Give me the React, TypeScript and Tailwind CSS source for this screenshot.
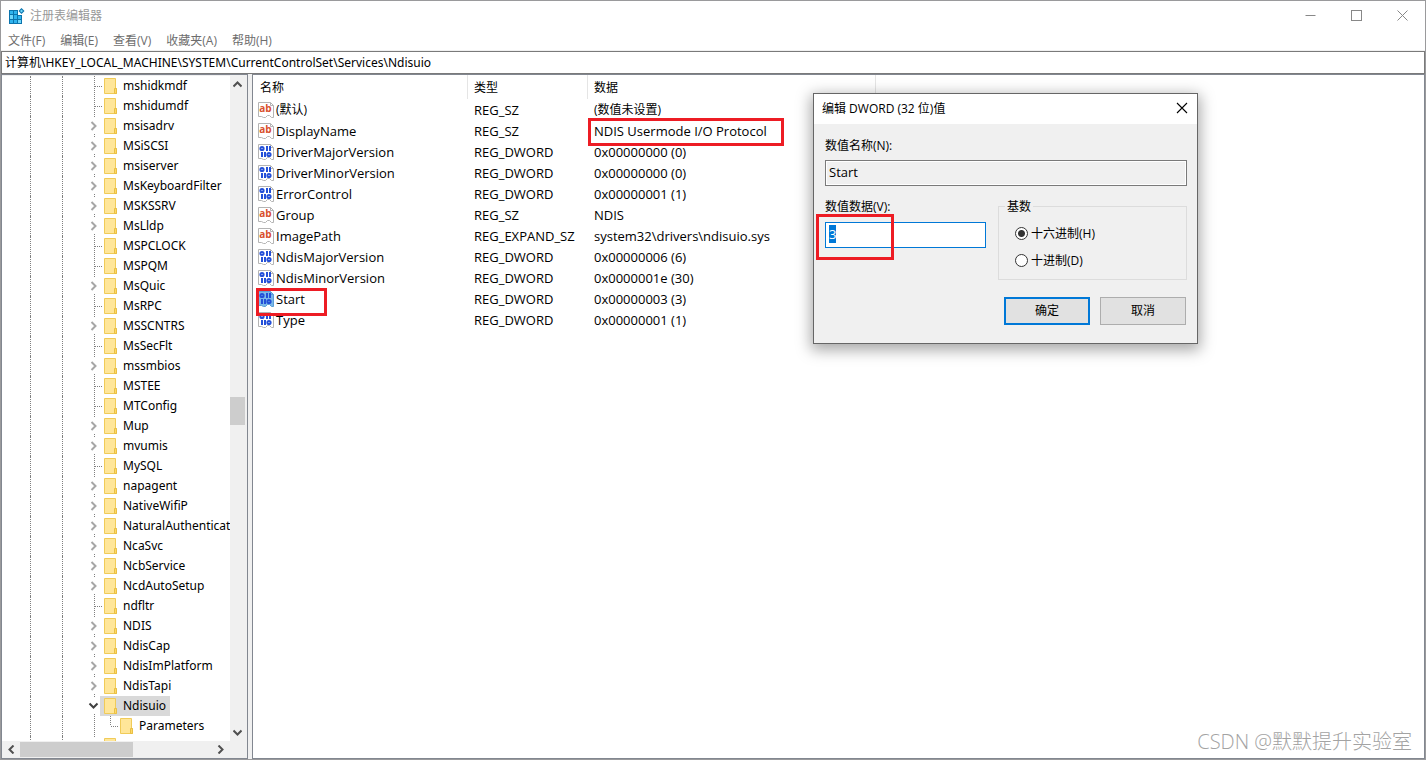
import { FC, ReactNode, useEffect, useRef, useState } from 'react';

type TreeNode = {
  name: string;
  state: 'leaf' | 'collapsed' | 'expanded';
};

type ValueKind = 'string' | 'binary';

type RegistryValue = {
  name: string;
  kind: ValueKind;
  type: string;
  data: string;
};

const leaf = (name: string): TreeNode => ({ name, state: 'leaf' });
const branch = (name: string): TreeNode => ({ name, state: 'collapsed' });

const nodes: TreeNode[] = [
  leaf('mshidkmdf'),
  leaf('mshidumdf'),
  branch('msisadrv'),
  branch('MSiSCSI'),
  branch('msiserver'),
  branch('MsKeyboardFilter'),
  branch('MSKSSRV'),
  branch('MsLldp'),
  leaf('MSPCLOCK'),
  leaf('MSPQM'),
  branch('MsQuic'),
  leaf('MsRPC'),
  branch('MSSCNTRS'),
  leaf('MsSecFlt'),
  branch('mssmbios'),
  leaf('MSTEE'),
  leaf('MTConfig'),
  branch('Mup'),
  branch('mvumis'),
  leaf('MySQL'),
  branch('napagent'),
  branch('NativeWifiP'),
  branch('NaturalAuthenticat'),
  branch('NcaSvc'),
  branch('NcbService'),
  branch('NcdAutoSetup'),
  leaf('ndfltr'),
  branch('NDIS'),
  branch('NdisCap'),
  branch('NdisImPlatform'),
  branch('NdisTapi'),
  { name: 'Ndisuio', state: 'expanded' }
];

const values: RegistryValue[] = [
  { name: '(默认)', kind: 'string', type: 'REG_SZ', data: '(数值未设置)' },
  { name: 'DisplayName', kind: 'string', type: 'REG_SZ', data: 'NDIS Usermode I/O Protocol' },
  { name: 'DriverMajorVersion', kind: 'binary', type: 'REG_DWORD', data: '0x00000000 (0)' },
  { name: 'DriverMinorVersion', kind: 'binary', type: 'REG_DWORD', data: '0x00000000 (0)' },
  { name: 'ErrorControl', kind: 'binary', type: 'REG_DWORD', data: '0x00000001 (1)' },
  { name: 'Group', kind: 'string', type: 'REG_SZ', data: 'NDIS' },
  { name: 'ImagePath', kind: 'string', type: 'REG_EXPAND_SZ', data: 'system32\\drivers\\ndisuio.sys' },
  { name: 'NdisMajorVersion', kind: 'binary', type: 'REG_DWORD', data: '0x00000006 (6)' },
  { name: 'NdisMinorVersion', kind: 'binary', type: 'REG_DWORD', data: '0x0000001e (30)' },
  { name: 'Start', kind: 'binary', type: 'REG_DWORD', data: '0x00000003 (3)' },
  { name: 'Type', kind: 'binary', type: 'REG_DWORD', data: '0x00000001 (1)' }
];

const menus = ['文件(F)', '编辑(E)', '查看(V)', '收藏夹(A)', '帮助(H)'];

const hasChinese = (text: string) => /[\u4e00-\u9fff]/.test(text);

const RegeditIcon: FC = () => (
  <svg width="17" height="16" viewBox="0 0 17 16" aria-hidden="true">
    <path d="M1 2h9v5h4v9H1z" fill="#0b74ad" />
    <path d="M2 3h3v3H2zM6 3h3v3H6zM6 7h3v4H6zM2 12h3v3H2zM6 12h3v3H6zM10 8h3v3h-3z" fill="#2fb3ee" />
    <path d="M2 7h3v4H2zM10 12h3v3h-3z" fill="#6fd6fa" />
    <path d="M13.500 0l3 3-3 3-3-3z" fill="#0b74ad" />
    <path d="M13.500 1.500l1.500 1.500-1.500 1.500L12 3z" fill="#6fd6fa" />
  </svg>
);

const FolderIcon: FC = () => (
  <svg width="13" height="16" viewBox="0 0 13 16" className="shrink-0" aria-hidden="true">
    <path d="M0.500 0.500h11v10h1v5h-12z" fill="#ffe699" stroke="#f0cb58" />
    <path d="M10.500 15.500v-5h2v5z" fill="#ffd966" stroke="#e9bf45" />
  </svg>
);

const ValueIcon: FC<{ kind: ValueKind; selected?: boolean }> = ({ kind, selected }) => (
  <svg width="16" height="16" viewBox="0 0 16 16" className="shrink-0" aria-hidden="true">
    <path
      d="M0.500 0.500H12.500L15.500 3.500V15.500H13.500L11.500 13.500H9.500L7.500 15.500H5.500L3.500 14.500H0.500z"
      fill={selected ? '#7bb8ea' : '#fff'}
      stroke={selected ? '#5a9fd6' : '#b4b4b4'}
    />
    <path d="M12.500 0.500v3h3" fill="none" stroke={selected ? '#5a9fd6' : '#b4b4b4'} />
    {kind === 'string' ? (
      <text x="7.500" y="10" textAnchor="middle" fontSize="10" fontWeight="700" fill="#d9502e">
        ab
      </text>
    ) : (
      <g fill="none" stroke="#2450d8" strokeWidth="2">
        <circle cx="4" cy="4.500" r="1.600" />
        <path d="M9 2v5M12 2v5M4 8v5M7 8v5" />
        <circle cx="11" cy="10.500" r="1.600" />
      </g>
    )}
  </svg>
);

const Expander: FC<{ state: TreeNode['state'] }> = ({ state }) => (
  <svg width="18" height="20" viewBox="0 0 18 20" className="shrink-0" aria-hidden="true">
    {state === 'leaf' && (
      <g stroke="#808080" strokeDasharray="1 1" shapeRendering="crispEdges">
        <path d="M8.500 0v20M9 10.500h7" />
      </g>
    )}
    {state === 'collapsed' && (
      <>
        <path d="M8.500 0v2M8.500 18v2" stroke="#808080" strokeDasharray="1 1" shapeRendering="crispEdges" />
        <path d="M5.500 6l4 4-4 4" fill="none" stroke="#a6a6a6" strokeWidth="2" />
      </>
    )}
    {state === 'expanded' && (
      <>
        <path d="M8.500 0v2M8.500 18v2" stroke="#808080" strokeDasharray="1 1" shapeRendering="crispEdges" />
        <path d="M3.500 7.500l4 4 4-4" fill="none" stroke="#404040" strokeWidth="2" />
      </>
    )}
  </svg>
);

const Guides: FC = () => (
  <>
    <span className="ml-7 h-5 w-8 shrink-0 border-l border-dotted border-[#808080]" />
    <span className="h-5 w-6 shrink-0 border-l border-dotted border-[#808080]" />
  </>
);

const ScrollArrow: FC<{ d: string; label: string }> = ({ d, label }) => (
  <button type="button" aria-label={label} className="flex size-[17px] shrink-0 items-center justify-center">
    <svg width="9" height="9" viewBox="0 0 9 9">
      <path d={d} fill="none" stroke="#505050" strokeWidth="2" />
    </svg>
  </button>
);

const Highlight: FC<{ className: string }> = ({ className }) => (
  <span className={`pointer-events-none absolute z-10 border-3 border-[#ed1c24] ${className}`} />
);

const KeyTree: FC = () => (
  <nav className="flex w-[247px] shrink-0 flex-col border border-[#828790] bg-[#f0f0f0] pr-[2px] pt-px">
    <div className="flex min-h-0 flex-1">
      <ul className="min-w-0 flex-1 overflow-hidden bg-white font-['Noto_Sans',sans-serif] text-xs">
        {nodes.map((node) => (
          <li key={node.name} className="flex h-5 items-center whitespace-nowrap">
            <Guides />
            <Expander state={node.state} />
            <a
              href={`#${node.name}`}
              className={`-ml-1 flex h-5 items-center gap-[6px] pl-1 pr-1 ${node.state === 'expanded' ? 'bg-[#d9d9d9]' : ''}`}
            >
              <FolderIcon />
              {node.name}
            </a>
          </li>
        ))}
        <li className="flex h-5 items-center whitespace-nowrap">
          <Guides />
          <svg width="34" height="20" viewBox="0 0 34 20" className="shrink-0" aria-hidden="true">
            <path d="M8.500 0v20M24.500 0v10M25 10.500h7" stroke="#808080" strokeDasharray="1 1" shapeRendering="crispEdges" />
          </svg>
          <a href="#Parameters" className="flex items-center gap-[6px]">
            <FolderIcon />
            Parameters
          </a>
        </li>
        <li className="flex h-5 items-center">
          <Guides />
          <Expander state="collapsed" />
          <FolderIcon />
        </li>
      </ul>
      <div className="flex w-[15px] flex-col items-center">
        <ScrollArrow label="向上滚动" d="M0.500 6.500l4-4 4 4" />
        <span className="grow-[304]" />
        <span className="w-full grow-[27] bg-[#cdcdcd]" />
        <span className="grow-[299]" />
        <ScrollArrow label="向下滚动" d="M0.500 2.500l4 4 4-4" />
      </div>
    </div>
    <div className="flex h-[17px] items-center pl-px pr-4">
      <ScrollArrow label="向左滚动" d="M6.500 0.500l-4 4 4 4" />
      <span className="h-[15px] grow-[113] bg-[#cdcdcd]" />
      <span className="grow-[79]" />
      <ScrollArrow label="向右滚动" d="M2.500 0.500l4 4-4 4" />
    </div>
  </nav>
);

const HeaderCell: FC<{ className: string; children?: ReactNode }> = ({ className, children }) => (
  <th scope="col" className={`border-r border-[#e5e5e5] p-0 pt-[2px] text-left font-normal ${className}`}>
    {children}
  </th>
);

const ValueTable: FC = () => (
  <main className="min-w-0 flex-1 overflow-hidden border border-[#828790] bg-white">
    <table className="w-full table-fixed border-separate border-spacing-0 text-[13px]">
      <thead>
        <tr className="h-6 text-xs">
          <HeaderCell className="w-[215px] pl-[7px]">名称</HeaderCell>
          <HeaderCell className="w-[120px] pl-[6px]">类型</HeaderCell>
          <HeaderCell className="w-[288px] pl-[6px]">数据</HeaderCell>
          <th className="p-0" />
        </tr>
      </thead>
      <tbody>
        {values.map((value) => (
          <tr key={value.name} className="h-[21px] leading-5">
            <td className="relative p-0 pl-[5px]">
              <span className={`flex items-center gap-[2px] ${hasChinese(value.name) ? 'text-xs' : ''}`}>
                <ValueIcon kind={value.kind} selected={value.name === 'Start'} />
                {value.name}
              </span>
              {value.name === 'Start' && <Highlight className="top-0 left-[3px] h-7 w-[71px]" />}
            </td>
            <td className="p-0 pl-[6px]">{value.type}</td>
            <td className={`relative p-0 pl-[6px] ${hasChinese(value.data) ? 'text-xs' : ''}`}>
              {value.data}
              {value.name === 'DisplayName' && <Highlight className="-top-[2px] left-0 h-7 w-[196px]" />}
            </td>
            <td className="p-0" />
          </tr>
        ))}
      </tbody>
    </table>
  </main>
);

const EditDialog: FC = () => {
  const dataRef = useRef<HTMLInputElement>(null);
  const [data, setData] = useState('3');
  const [base, setBase] = useState('hex');

  useEffect(() => {
    dataRef.current?.focus();
    dataRef.current?.select();
  }, []);

  const bases = [
    { id: 'hex', label: '十六进制(H)' },
    { id: 'dec', label: '十进制(D)' }
  ];

  return (
    <div
      role="dialog"
      aria-labelledby="dialogTitle"
      className="absolute left-[812px] top-[92px] z-20 w-[385px] border border-[#666] bg-[#f0f0f0] text-xs shadow-[0_4px_14px_2px_rgba(0,0,0,0.35)]"
    >
      <div className="flex h-[30px] items-center justify-between bg-white pl-2 pr-[9px]">
        <h2 id="dialogTitle">编辑 DWORD (32 位)值</h2>
        <button type="button" aria-label="关闭" className="pb-[2px]">
          <svg width="12" height="12" viewBox="0 0 12 12">
            <path d="M1 1l10 10M11 1L1 11" stroke="#000" strokeWidth="1.100" />
          </svg>
        </button>
      </div>
      <form className="px-[10px] pb-[18px] pt-3" onSubmit={(event) => event.preventDefault()}>
        <label htmlFor="valueName" className="ml-px block leading-5">
          数值名称(N):
        </label>
        <input
          id="valueName"
          readOnly
          value="Start"
          className="ml-px mt-1 block h-[26px] w-[362px] border border-[#7a7a7a] bg-[#f0f0f0] px-[3px] pb-[3px] text-[13px] shadow-[inset_0_0_0_1px_#fff]"
        />
        <div className="mt-[10px] flex justify-between pl-px">
          <div className="relative">
            <label htmlFor="valueData" className="block pt-px leading-5">
              数值数据(V):
            </label>
            <input
              id="valueData"
              ref={dataRef}
              value={data}
              onChange={(event) => setData(event.target.value)}
              className="mt-[5px] block h-[26px] w-[161px] border border-[#0078d7] bg-white px-[3px] pb-[3px] text-[13px] outline-none selection:bg-[#0078d7] selection:text-white"
            />
            <Highlight className="-left-[9px] top-[18px] h-[46px] w-[78px]" />
          </div>
          <fieldset className="h-[84px] w-[189px] border border-[#dcdcdc] px-4">
            <legend className="-ml-[10px] px-[2px] pt-px leading-5">基数</legend>
            {bases.map(({ id, label }) => (
              <label key={id} htmlFor={id} className="flex h-[27px] items-center gap-[3px] pt-[6px]">
                <input
                  type="radio"
                  id={id}
                  name="base"
                  checked={base === id}
                  onChange={() => setBase(id)}
                  className="size-[13px] appearance-none rounded-full border border-[#333] bg-white checked:bg-[radial-gradient(circle,#333_3px,#fff_4px)]"
                />
                {label}
              </label>
            ))}
          </fieldset>
        </div>
        <div className="mt-[17px] flex justify-end gap-[10px] pr-px">
          <button type="submit" className="h-7 w-[86px] border-2 border-[#0078d7] bg-[#e1e1e1]">
            确定
          </button>
          <button type="button" className="h-7 w-[86px] border border-[#adadad] bg-[#e1e1e1]">
            取消
          </button>
        </div>
      </form>
    </div>
  );
};

const App: FC = () => (
  <div className="relative flex h-screen flex-col overflow-hidden border border-[#9a9a9c] bg-[#f0f0f0] font-['Open_Sans','Noto_Sans_CJK_SC',sans-serif] text-xs text-black">
    <header className="bg-white">
      <div className="flex h-[30px] items-center pl-[7px] pr-[17px] text-[#999]">
        <RegeditIcon />
        <h1 className="ml-[5px] flex-1">注册表编辑器</h1>
        <div className="flex items-center gap-[35px] pb-px">
          <button type="button" aria-label="最小化">
            <svg width="11" height="11" viewBox="0 0 11 11">
              <path d="M0.500 5.500h10" stroke="#888" />
            </svg>
          </button>
          <button type="button" aria-label="最大化">
            <svg width="11" height="11" viewBox="0 0 11 11">
              <rect x="0.500" y="0.500" width="10" height="10" fill="none" stroke="#888" />
            </svg>
          </button>
          <button type="button" aria-label="关闭">
            <svg width="11" height="11" viewBox="0 0 11 11">
              <path d="M0.500 0.500l10 10M10.500 0.500l-10 10" stroke="#888" />
            </svg>
          </button>
        </div>
      </div>
      <div className="flex h-[19px] items-center gap-[15px] pl-[7px] text-[#6d6d6d]">
        {menus.map((menu) => (
          <button key={menu} type="button">
            {menu}
          </button>
        ))}
      </div>
    </header>
    <input
      aria-label="地址"
      readOnly
      value="计算机\HKEY_LOCAL_MACHINE\SYSTEM\CurrentControlSet\Services\Ndisuio"
      className="mt-px h-[23px] shrink-0 border border-[#7a7a7a] bg-white px-[3px] pb-px font-['Noto_Sans','Noto_Sans_CJK_SC',sans-serif] text-xs outline-none"
    />
    <div className="flex min-h-0 flex-1 gap-1">
      <KeyTree />
      <ValueTable />
    </div>
    <EditDialog />
    <p className="absolute bottom-[3px] right-[13px] text-xl font-light text-[#a3a3a3]">CSDN @默默提升实验室</p>
  </div>
);

export default App;
